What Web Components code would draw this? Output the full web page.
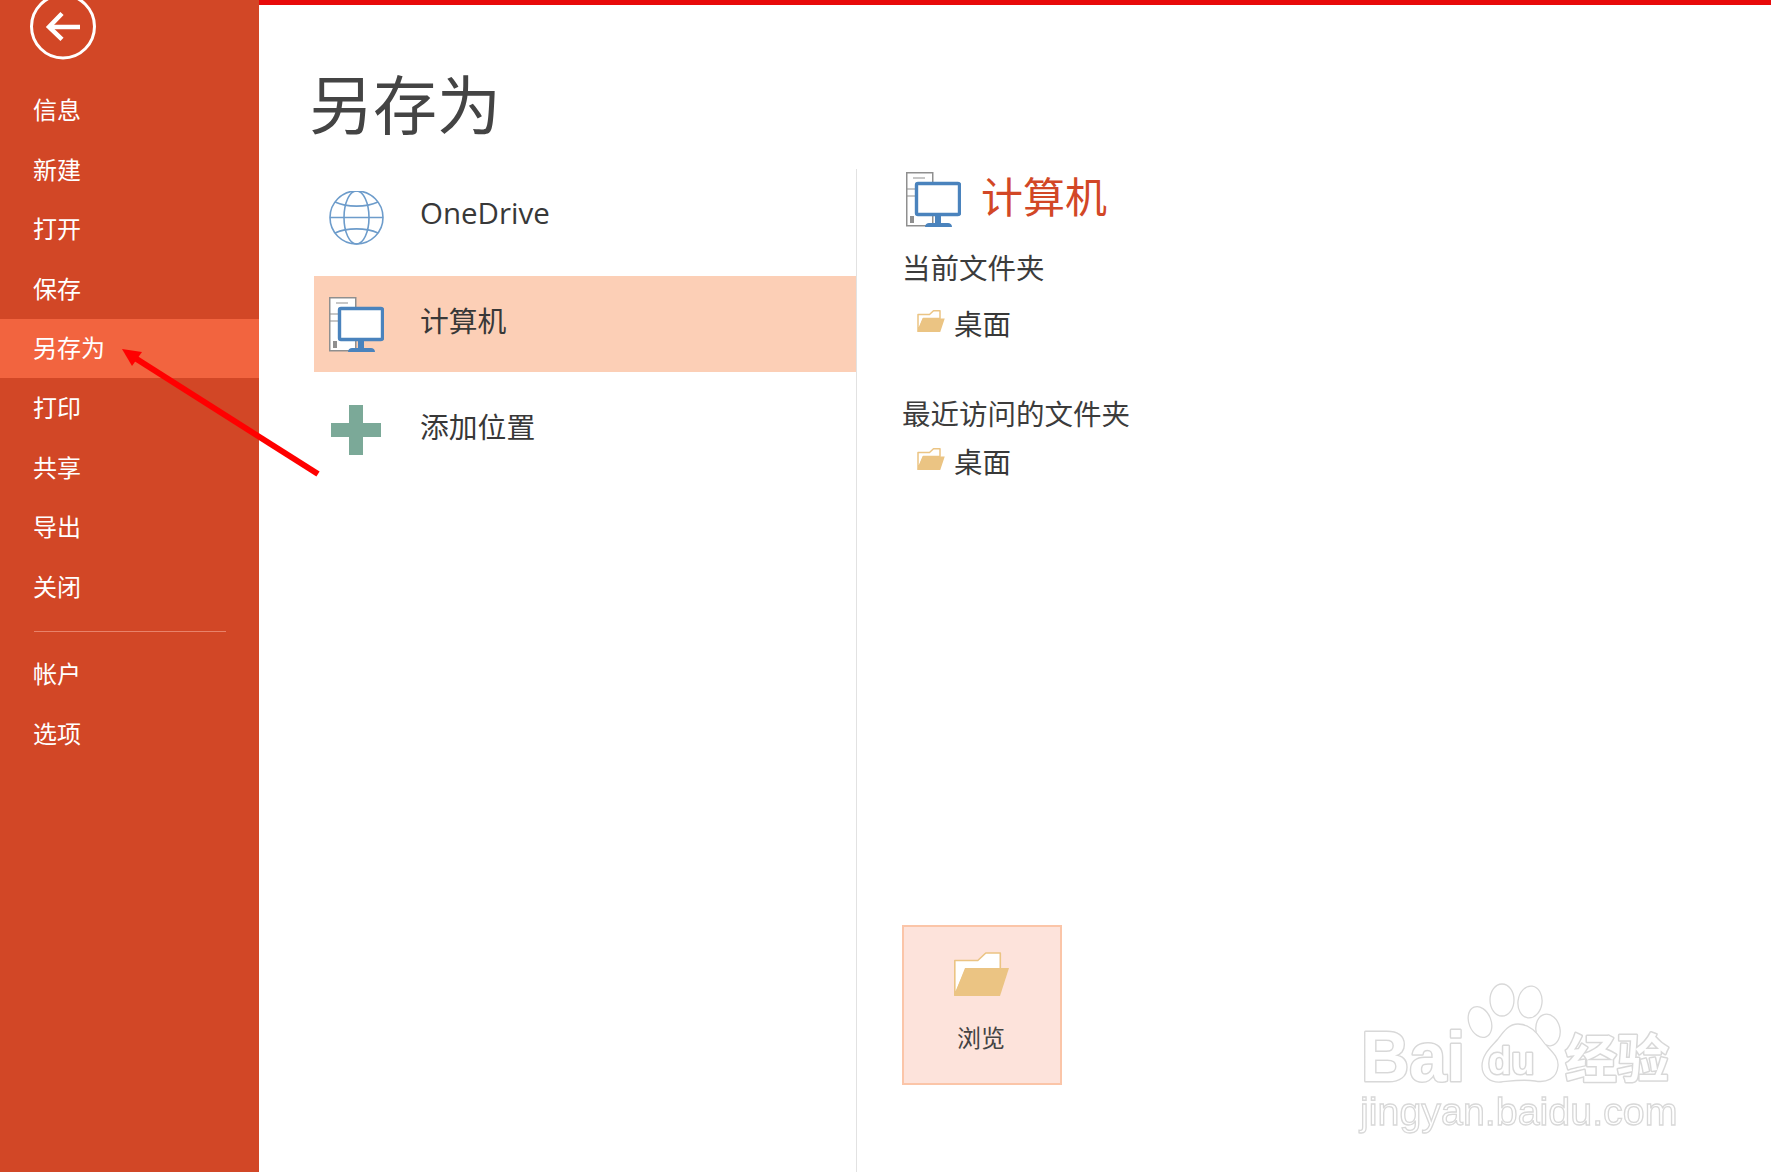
<!DOCTYPE html>
<html lang="zh-CN">
<head>
<meta charset="utf-8">
<title>另存为</title>
<style>
  html, body { margin: 0; height: 100%; background: #fff; overflow: hidden; }
  body { font-family: "Noto Sans CJK SC", "Open Sans", sans-serif; }
</style>
</head>
<body>
<ppt-backstage>
  <ppt-sidebar slot="side">
    <ppt-nav-item>信息</ppt-nav-item>
    <ppt-nav-item>新建</ppt-nav-item>
    <ppt-nav-item>打开</ppt-nav-item>
    <ppt-nav-item>保存</ppt-nav-item>
    <ppt-nav-item active>另存为</ppt-nav-item>
    <ppt-nav-item>打印</ppt-nav-item>
    <ppt-nav-item>共享</ppt-nav-item>
    <ppt-nav-item>导出</ppt-nav-item>
    <ppt-nav-item>关闭</ppt-nav-item>
    <ppt-nav-item slot="lower">帐户</ppt-nav-item>
    <ppt-nav-item slot="lower">选项</ppt-nav-item>
  </ppt-sidebar>

  <ppt-place slot="places" icon="globe"><span style="font-family:'Open Sans',sans-serif;font-size:29.500px;position:relative;top:-2px">OneDrive</span></ppt-place>
  <ppt-place slot="places" icon="computer" selected>计算机</ppt-place>
  <ppt-place slot="places" icon="plus">添加位置</ppt-place>

  <ppt-section slot="detail" label="当前文件夹">
    <ppt-folder-row>桌面</ppt-folder-row>
  </ppt-section>
  <ppt-section slot="detail" label="最近访问的文件夹" recent>
    <ppt-folder-row>桌面</ppt-folder-row>
  </ppt-section>
  <ppt-browse slot="browse">浏览</ppt-browse>
</ppt-backstage>
<ppt-red-arrow></ppt-red-arrow>
<ppt-watermark></ppt-watermark>

<script>
const ICONS = {
  globe: `<svg width="55" height="55" viewBox="0 1 55 55" fill="none" stroke="#6d9ccb" stroke-width="1.6">
    <circle cx="27.5" cy="27.5" r="26.5"/>
    <ellipse cx="27.5" cy="27.5" rx="12.5" ry="26.5"/>
    <path d="M1 27.5H54M6 12c12 5.5 31 5.5 43 0M6 43c12-5.5 31-5.5 43 0"/>
  </svg>`,
  computer: `<svg width="55" height="55" viewBox="0 0 55 55">
    <rect x=".75" y=".75" width="26" height="53" fill="#fff" stroke="#8f8f8f" stroke-width="1.5"/>
    <path d="M7 6h12M1 17h8M1 24h8" stroke="#8f8f8f" stroke-width="1.2" fill="none"/>
    <rect x="4" y="44" width="4" height="7" fill="#8f8f8f"/>
    <rect x="10.5" y="11.5" width="43" height="31" rx="1.5" fill="#fff" stroke="#4a83bd" stroke-width="3.4"/>
    <rect x="29" y="44" width="6" height="8" fill="#4a83bd"/>
    <path d="M19 55c0-2.500 2-4 4-4h19c2 0 4 1.500 4 4z" fill="#4a83bd"/>
  </svg>`,
  plus: `<svg width="55" height="55" viewBox="0 0 55 55">
    <path d="M20 2h14v18h18v14H34v18H20V34H2V20h18z" fill="#7ba998"/>
  </svg>`,
  folder: `<svg width="55" height="44" viewBox="0 0 55 44">
    <path d="M.8 43V8.500h23l8-7.500h14.500v16H12z" fill="#fff" stroke="#ebc483" stroke-width="1.600" stroke-linejoin="round"/>
    <path d="M11 16h44l-9 28H0z" fill="#ebc483"/>
  </svg>`
};

class PptBackstage extends HTMLElement {
  constructor() {
    super();
    this.attachShadow({ mode: 'open' });
    this.shadowRoot.innerHTML = `
      <style>
        :host { display: flex; height: 1172px; color: #444; }
        .main { flex: 1; display: flex; flex-direction: column; min-width: 0; }
        .topbar { height: 5px; background: #e80a0a; }
        h1 { margin: 0; padding: 59px 0 0 50px; height: 105px; font: 400 64px/74px "Noto Sans CJK SC", sans-serif; color: #444; box-sizing: content-box; }
        .cols { flex: 1; display: flex; min-height: 0; }
        .left { width: 542px; margin-left: 55px; display: flex; flex-direction: column; gap: 10px; padding-top: 1px; }
        .right { flex: 1; border-left: 1px solid #e2e2e2; padding: 3px 0 87px 45px; display: flex; flex-direction: column; }
        .head { display: flex; align-items: center; gap: 20px; margin-left: 4px; height: 55px;
          font-size: 42px; color: #d24726; }
        .head span { margin-top: -11px; }
        .foot { margin-top: auto; }
      </style>
      <slot name="side"></slot>
      <div class="main">
        <div class="topbar"></div>
        <h1>另存为</h1>
        <div class="cols">
          <div class="left"><slot name="places"></slot></div>
          <div class="right">
            <div class="head">${ICONS.computer}<span>计算机</span></div>
            <slot name="detail"></slot>
            <div class="foot"><slot name="browse"></slot></div>
          </div>
        </div>
      </div>`;
  }
}

class PptSidebar extends HTMLElement {
  constructor() {
    super();
    this.attachShadow({ mode: 'open' });
    this.shadowRoot.innerHTML = `
      <style>
        :host { display: block; width: 259px; flex: none; background: #d24726; overflow: hidden; }
        .back { display: block; height: 80.2px; }
        hr { border: 0; height: 1px; background: #e8826a; margin: 14px 33px 13px 34px; }
      </style>
      <svg class="back" width="130" viewBox="0 0 130 80.200" fill="none" stroke="#fff">
        <circle cx="63" cy="26.500" r="31.500" stroke-width="3"/>
        <path d="M49 27H80" stroke-width="4.500"/>
        <path d="M62 13.500L49 27 62 39.500" stroke-width="4.500"/>
      </svg>
      <slot></slot>
      <hr>
      <slot name="lower"></slot>`;
  }
}

class PptNavItem extends HTMLElement {
  constructor() {
    super();
    this.attachShadow({ mode: 'open' });
    this.shadowRoot.innerHTML = `
      <style>
        :host { display: flex; align-items: center; box-sizing: border-box; height: 59.600px; padding: 0 0 2px 33px;
          color: #fff; font-size: 24px; line-height: 1; }
        :host([active]) { background: #f2643f; }
      </style>
      <slot></slot>`;
  }
}

class PptPlace extends HTMLElement {
  constructor() {
    super();
    this.attachShadow({ mode: 'open' });
    this.shadowRoot.innerHTML = `
      <style>
        :host { display: flex; align-items: center; gap: 36px; height: 96px; padding-left: 15px;
          font-size: 28.800px; color: #383838; }
        :host([selected]) { background: #fccfb6; }
        .icon { display: block; width: 55px; height: 55px; }
        svg { display: block; }
        .text { margin-top: -9px; }
      </style>
      <div class="icon">${ICONS[this.getAttribute('icon')] || ''}</div>
      <span class="text"><slot></slot></span>`;
  }
}

class PptSection extends HTMLElement {
  constructor() {
    super();
    this.attachShadow({ mode: 'open' });
    this.shadowRoot.innerHTML = `
      <style>
        :host { display: block; }
        .label { font-size: 28.500px; line-height: 40px; color: #3c3c3c; margin-top: 20px; }
        :host([recent]) .label { margin-top: 51px; }
        ::slotted(ppt-folder-row) { margin-top: 15px; }
        :host([recent]) ::slotted(ppt-folder-row) { margin-top: 7px; }
      </style>
      <div class="label">${this.getAttribute('label')}</div>
      <slot></slot>`;
  }
}

class PptFolderRow extends HTMLElement {
  constructor() {
    super();
    this.attachShadow({ mode: 'open' });
    this.shadowRoot.innerHTML = `
      <style>
        :host { display: flex; align-items: center; height: 40px; padding-left: 15px; gap: 9px;
          font-size: 28.500px; color: #383838; }
        svg { display: block; margin-top: -2px; }
      </style>
      <svg width="28" height="22" viewBox="0 0 55 44">
        <path d="M1.500 42V9h23l8-7.500h13V17H12z" fill="#fff" stroke="#ebc483" stroke-width="3" stroke-linejoin="round"/>
        <path d="M11 17h44l-9 27H0z" fill="#ebc483"/>
      </svg>
      <slot></slot>`;
  }
}

class PptBrowse extends HTMLElement {
  constructor() {
    super();
    this.attachShadow({ mode: 'open' });
    this.shadowRoot.innerHTML = `
      <style>
        :host { display: flex; flex-direction: column; align-items: center; box-sizing: border-box;
          width: 160px; height: 160px; padding-top: 25px; gap: 24px; background: #fde3db;
          border: 2px solid #fbc5a8; font-size: 24px; line-height: 34px; color: #444; }
        svg { display: block; margin-left: -1px; }
        span { margin-left: -2px; }
      </style>
      ${ICONS.folder}
      <span><slot></slot></span>`;
  }
}

// annotation drawn on top of the screenshot
class PptRedArrow extends HTMLElement {
  constructor() {
    super();
    this.attachShadow({ mode: 'open' });
    this.shadowRoot.innerHTML = `
      <style>
        :host { position: absolute; left: 110px; top: 340px; display: block; pointer-events: none; }
        svg { display: block; }
      </style>
      <svg width="220" height="145" viewBox="110 340 220 145">
        <path d="M135 358L318 474" stroke="#f00" stroke-width="6" fill="none"/>
        <path d="M122 349L142 352 132 366z" fill="#f00"/>
      </svg>`;
  }
}

class PptWatermark extends HTMLElement {
  constructor() {
    super();
    this.attachShadow({ mode: 'open' });
    this.shadowRoot.innerHTML = `
      <style>
        :host { position: absolute; left: 1340px; top: 960px; display: block; pointer-events: none; }
        svg { display: block; filter: blur(.5px); }
        text { fill: #fff; stroke: #d8d8d8; stroke-width: 1.300; }
        .en, .cn { stroke-width: 3; paint-order: stroke; stroke-linejoin: round; }
        .en { font-family: "Liberation Sans", sans-serif; font-weight: 700; }
        .cn { font-family: "Noto Sans CJK SC", sans-serif; font-weight: 700; }
        .url { font-family: "Liberation Sans", sans-serif; font-weight: 400; }
      </style>
      <svg width="360" height="190" viewBox="0 0 360 190" fill="#fff" stroke="#d8d8d8" stroke-width="1.300">
        <ellipse cx="162" cy="40" rx="12" ry="16"/>
        <ellipse cx="190" cy="42" rx="12" ry="16" transform="rotate(8 190 42)"/>
        <ellipse cx="140" cy="62" rx="11" ry="16" transform="rotate(-22 140 62)"/>
        <ellipse cx="208" cy="70" rx="12" ry="16" transform="rotate(-12 208 70)"/>
        <path d="M178 64c-9 0-14 7-20 15-6 7-16 15-16 27 0 11 9 17 19 16 10-1 22-3 34-1 11 2 22-2 23-15 1-11-10-17-16-26-6-9-13-16-24-16z"/>
        <text class="en" x="21" y="121" font-size="70" textLength="104" lengthAdjust="spacingAndGlyphs">Bai</text>
        <text class="en" x="148" y="114" font-size="38">du</text>
        <text class="cn" x="225" y="118" font-size="52">经验</text>
        <text class="url" x="20" y="165" font-size="39.400">jingyan.baidu.com</text>
      </svg>`;
  }
}

customElements.define('ppt-backstage', PptBackstage);
customElements.define('ppt-sidebar', PptSidebar);
customElements.define('ppt-nav-item', PptNavItem);
customElements.define('ppt-place', PptPlace);
customElements.define('ppt-section', PptSection);
customElements.define('ppt-folder-row', PptFolderRow);
customElements.define('ppt-browse', PptBrowse);
customElements.define('ppt-red-arrow', PptRedArrow);
customElements.define('ppt-watermark', PptWatermark);
</script>
</body>
</html>
